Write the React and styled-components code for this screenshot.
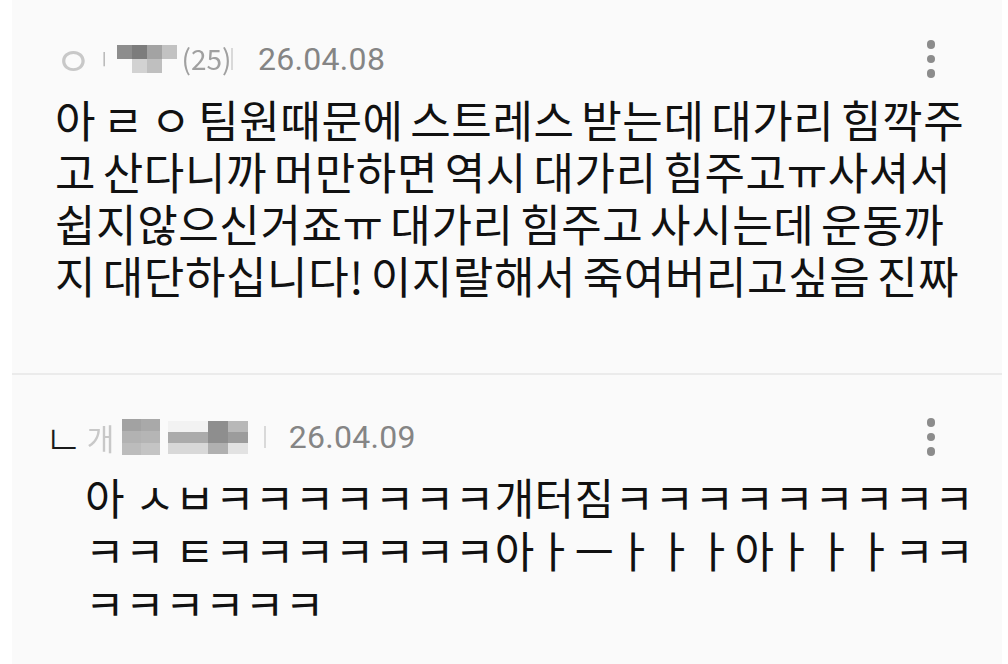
import React from "react";
import styled, { createGlobalStyle } from "styled-components";

const Global = createGlobalStyle`
  html, body { margin: 0; padding: 0; background: #ffffff; }
  body { font-family: "Noto Sans CJK KR", "Noto Sans", sans-serif; }
`;

const Page = styled.div`
  width: 1008px;
  height: 664px;
  overflow: hidden;
  padding: 0 6px 0 12px;
  box-sizing: border-box;
`;

const Card = styled.div`
  background: #fafafa;
  padding: ${(p) => p.$pad};
  border-bottom: ${(p) => (p.$divider ? "2px solid #ebebeb" : "none")};
`;

const Header = styled.div`
  display: flex;
  align-items: center;
  height: 40px;
  margin-right: ${(p) => p.$mr}px;
`;

const Meta = styled.div`
  flex: 1;
  display: flex;
  align-items: center;
  font-family: Roboto, "Noto Sans CJK KR", sans-serif;
  font-size: 32px;
  color: #858585;
`;

const ReplyMark = styled.span`
  font-family: "Noto Sans CJK KR", sans-serif;
  font-size: 42px;
  font-weight: 300;
  color: #1a1a1a;
  line-height: 1;
  margin: 0 4px 0 -6px;
`;

const Name = styled.span`
  display: flex;
  align-items: center;
  width: ${(p) => p.$w}px;
  gap: ${(p) => p.$gap || 0}px;
  filter: blur(0.7px);
`;

const Ghost = styled.span`
  font-family: "Noto Sans CJK KR", sans-serif;
  font-size: ${(p) => p.$size || 32}px;
  color: ${(p) => p.$color || "#c8c8c8"};
  line-height: 1.2;
  flex: none;
`;

const Mosaic = styled.span`
  display: grid;
  flex: none;
  grid-template-columns: repeat(${(p) => p.$cols}, ${(p) => p.$tw}px);
  grid-auto-rows: ${(p) => p.$th}px;
`;

const Tile = styled.span`
  background: ${(p) => p.$c};
`;

const Sep = styled.span`
  width: 2px;
  height: 22px;
  background: #d9d9d9;
  margin: 0 ${(p) => p.$after}px 0 ${(p) => p.$before}px;
`;

const DateText = styled.span`
  letter-spacing: 0.3px;
`;

const Kebab = styled.div`
  display: flex;
  flex-direction: column;
  gap: 6px;
  span {
    width: 8.5px;
    height: 8.5px;
    border-radius: 50%;
    background: #8c8c8c;
  }
`;

const Body = styled.p`
  margin: ${(p) => p.$mt}px 0 0 ${(p) => p.$indent || 0}px;
  font-size: ${(p) => p.$size}px;
  line-height: ${(p) => p.$lh}px;
  letter-spacing: ${(p) => p.$ls}px;
  word-spacing: ${(p) => p.$ws || 0}px;
  color: #111;
`;

function Dots() {
  return (
    <Kebab>
      <span />
      <span />
      <span />
    </Kebab>
  );
}

function Censor({ cols, tw, th, tiles }) {
  return (
    <Mosaic $cols={cols} $tw={tw} $th={th}>
      {tiles.map((c, i) => (
        <Tile key={i} $c={c} />
      ))}
    </Mosaic>
  );
}

const T = "transparent";

const name1 = [
  "#8d8d8d", "#7c7c7c", "#a3a3a3", "#c2c2c2",
  T, "#d2d2d2", "#bfbfbf", T,
];

const name2a = ["#a2a2a2", "#a9a9a9", "#b2b2b2", "#b5b5b5", "#bcbcbc", "#c4c4c4"];

const name2b = [
  "#f2f2f2", "#f2f2f2", "#8e8e8e", "#b8b8b8",
  "#ababab", "#ababab", "#8e8e8e", "#9c9c9c",
  "#d8d8d8", "#d8d8d8", "#b0b0b0", "#e2e2e2",
];

export default function App() {
  return (
    <Page>
      <Global />
      <Card $pad="39px 27px 72px 43px" $divider>
        <Header $mr={40}>
          <Meta>
            <Name $w={172} $gap={5}>
              <Ghost $size={40}>ㅇ</Ghost>
              <Ghost $size={16} $color="#b0b0b0">ㅣ</Ghost>
              <Censor cols={4} tw={15} th={14} tiles={name1} />
              <Ghost $size={28} $color="#a0a0a0">(25)</Ghost>
            </Name>
            <Sep $before={4} $after={25} />
            <DateText>26.04.08</DateText>
          </Meta>
          <Dots />
        </Header>
        <Body $mt={14} $lh={52} $size={44} $ls={0.6} $ws={-3.8}>
          아 ㄹ ㅇ 팀원때문에 스트레스 받는데 대가리 힘깍주고 산다니까 머만하면 역시 대가리 힘주고ㅠ사셔서 쉽지않으신거죠ㅠ 대가리 힘주고 사시는데 운동까지 대단하십니다! 이지랄해서 죽여버리고싶음 진짜
        </Body>
      </Card>
      <Card $pad="42px 14px 40px 38px">
        <Header $mr={53}>
          <Meta>
            <ReplyMark>ㄴ</ReplyMark>
            <Name $w={160} $gap={8}>
              <Ghost $size={30}>개</Ghost>
              <Censor cols={2} tw={19} th={12} tiles={name2a} />
              <Censor cols={4} tw={20} th={11} tiles={name2b} />
            </Name>
            <Sep $before={17} $after={23} />
            <DateText>26.04.09</DateText>
          </Meta>
          <Dots />
        </Header>
        <Body $mt={13} $lh={53} $size={43} $ls={0.4} $indent={35}>
          아 ㅅㅂㅋㅋㅋㅋㅋㅋㅋ개터짐ㅋㅋㅋㅋㅋㅋㅋㅋㅋㅋㅋ ㅌㅋㅋㅋㅋㅋㅋㅋ아ㅏㅡㅏㅏㅏ아ㅏㅏㅏㅋㅋㅋㅋㅋㅋㅋㅋ
        </Body>
      </Card>
    </Page>
  );
}
